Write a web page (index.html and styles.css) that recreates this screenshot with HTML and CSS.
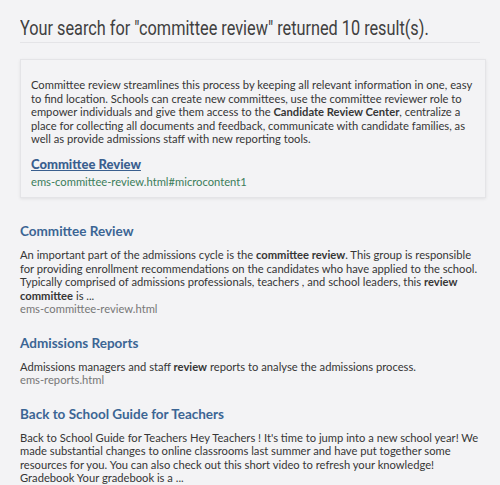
FILE: index.html
```html
<!DOCTYPE html>
<html>
<head>
<meta charset="utf-8">
<link rel="stylesheet" href="styles.css">
</head>
<body>
<div class="page">
  <h1 class="search-title"><span class="search-title-text">Your search for "committee review" returned 10 result(s).</span></h1>
  <div class="featured">
    <p class="featured-text">Committee review streamlines this process by keeping all relevant information in one, easy to find location. Schools can create new committees, use the committee reviewer role to empower individuals and give them access to the <b>Candidate Review Center</b>, centralize a place for collecting all documents and feedback, communicate with candidate families, as well as provide admissions staff with new reporting tools.</p>
    <a class="featured-link" href="#">Committee Review</a>
    <div class="featured-url">ems-committee-review.html#microcontent1</div>
  </div>
  <div class="result result-first">
    <a class="result-title" href="#">Committee Review</a>
    <p class="result-text">An important part of the admissions cycle is the <b>committee review</b>. This group is responsible for providing enrollment recommendations on the candidates who have applied to the school. Typically comprised of admissions professionals, teachers , and school leaders, this <b>review committee</b> is ...</p>
    <div class="result-url">ems-committee-review.html</div>
  </div>
  <div class="result">
    <a class="result-title" href="#">Admissions Reports</a>
    <p class="result-text">Admissions managers and staff <b>review</b> reports to analyse the admissions process.</p>
    <div class="result-url">ems-reports.html</div>
  </div>
  <div class="result">
    <a class="result-title" href="#">Back to School Guide for Teachers</a>
    <p class="result-text">Back to School Guide for Teachers Hey Teachers ! It's time to jump into a new school year! We made substantial changes to online classrooms last summer and have put together some resources for you. You can also check out this short video to refresh your knowledge! Gradebook Your gradebook is a ...</p>
  </div>
</div>
</body>
</html>
```
FILE: styles.css
```css
html, body {
  margin: 0;
  padding: 0;
  background: #f3f3f5;
}
body {
  font-family: Lato, "Open Sans", sans-serif;
  color: #363636;
  font-size: 11.2px;
  line-height: 13.5px;
}
.page {
  padding: 14px 14px 0 20px;
}
.search-title {
  margin: 0 6px 0 0;
  font-family: Roboto, "Liberation Sans", sans-serif;
  font-weight: 400;
  font-size: 21px;
  line-height: 28px;
  color: #404040;
  border-bottom: 1px solid #e4e4e7;
  white-space: nowrap;
  overflow: hidden;
}
.search-title-text {
  display: inline-block;
  transform: scaleX(0.775);
  transform-origin: left center;
}
.featured {
  margin-top: 16px;
  background: #f3f3f5;
  border: 1px solid #e4e4e7;
  box-shadow: 0 1px 3px rgba(0,0,0,0.08);
  padding: 18px 4px 9px 10px;
}
.featured-text {
  margin: 0 0 10px 0;
}
.featured-link {
  display: block;
  color: #3a5f8f;
  font-weight: 900;
  font-size: 13px;
  line-height: 17px;
  text-decoration: underline;
}
.featured-url {
  color: #3b7d5a;
  margin-top: 2px;
}
.result {
  margin-top: 19px;
}
.result-first {
  margin-top: 25px;
}
.result-title {
  display: block;
  color: #3b6594;
  font-weight: 700;
  font-size: 13.5px;
  line-height: 17px;
  text-decoration: none;
}
.result-text {
  margin: 8px 0 0 0;
}
.result-url {
  color: #777;
}
```
